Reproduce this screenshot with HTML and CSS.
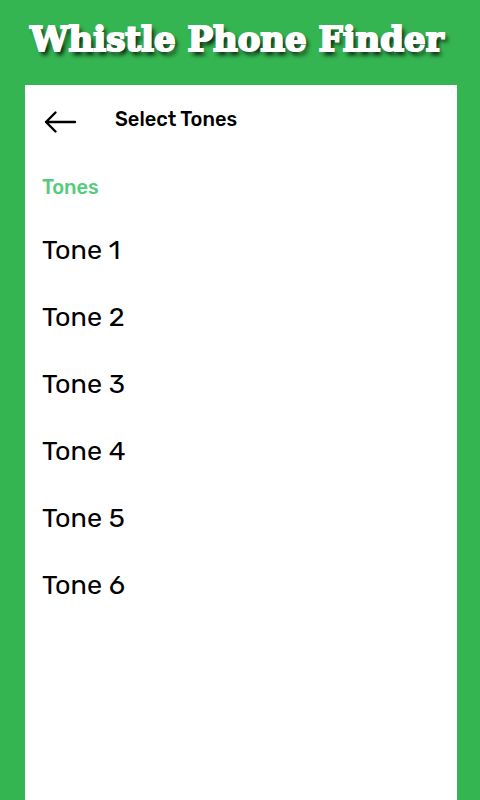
FILE: index.html
```
<!DOCTYPE html>
<html lang="en">
  <head>
    <meta charset="UTF-8">
    <meta name="viewport" content="width=device-width, initial-scale=1.0">
    <title>Whistle Phone Finder</title>
    <link rel="stylesheet" href="styles.css">
  </head>
  <body>
    <h1 class="app-title">Whistle Phone Finder</h1>

    <main class="screen">
      <!-- Top Bar -->
      <header class="top-bar">
        <button class="back-button" type="button" aria-label="Back">
          <svg width="34" height="24" viewBox="0 0 34 24" fill="none" stroke="currentColor" stroke-width="2.4" stroke-linecap="round" stroke-linejoin="round">
            <path d="M12.5 2.5L3 12L12.5 21.5M3 12H32"/>
          </svg>
        </button>
        <h2 class="screen-title">Select Tones</h2>
      </header>

      <!-- Tone List -->
      <h3 class="section-label">Tones</h3>
      <ul class="tone-list">
        <li><button class="tone" type="button">Tone 1</button></li>
        <li><button class="tone" type="button">Tone 2</button></li>
        <li><button class="tone" type="button">Tone 3</button></li>
        <li><button class="tone" type="button">Tone 4</button></li>
        <li><button class="tone" type="button">Tone 5</button></li>
        <li><button class="tone" type="button">Tone 6</button></li>
      </ul>
    </main>
  </body>
</html>
```

FILE: styles.css
```
* {
  box-sizing: border-box;
}

body {
  font-family: Rubik, Inter, sans-serif;
  display: flex;
  flex-direction: column;
  min-height: 100vh;
  background-color: #35b551;
  color: #000;
  margin: 0;
}

h1, h2, h3, ul {
  margin: 0;
  padding: 0;
}

button {
  font-family: inherit;
  color: inherit;
  background: none;
  border: none;
  padding: 0;
  cursor: pointer;
}

.app-title {
  font-family: "Cooper Black", "DejaVu Serif", serif;
  font-size: 34px;
  font-weight: bold;
  line-height: 45px;
  padding: 17px 6px 23px 0;
  text-align: center;
  white-space: nowrap;
  color: #fff;
  -webkit-text-stroke: 2px #fff;
  text-shadow: 3px 4px 4px rgba(0, 0, 0, 0.85);
}

.screen {
  flex: 1;
  margin: 0 23px 0 25px;
  padding: 20px 17px;
  background: #fff;
}

.top-bar {
  display: flex;
  align-items: flex-start;
  gap: 38px;
  height: 32px;
}

.back-button {
  display: flex;
  padding: 5px 0 0 1px;
}

.screen-title {
  font-size: 20px;
  font-weight: 500;
  line-height: 28px;
}

.section-label {
  font-size: 20px;
  font-weight: 500;
  line-height: 28px;
  margin-top: 36px;
  color: #55cc7d;
}

.tone-list {
  list-style: none;
  margin-top: 15px;
}

.tone {
  display: block;
  width: 100%;
  height: 67px;
  font-size: 27px;
  text-align: left;
}
```
